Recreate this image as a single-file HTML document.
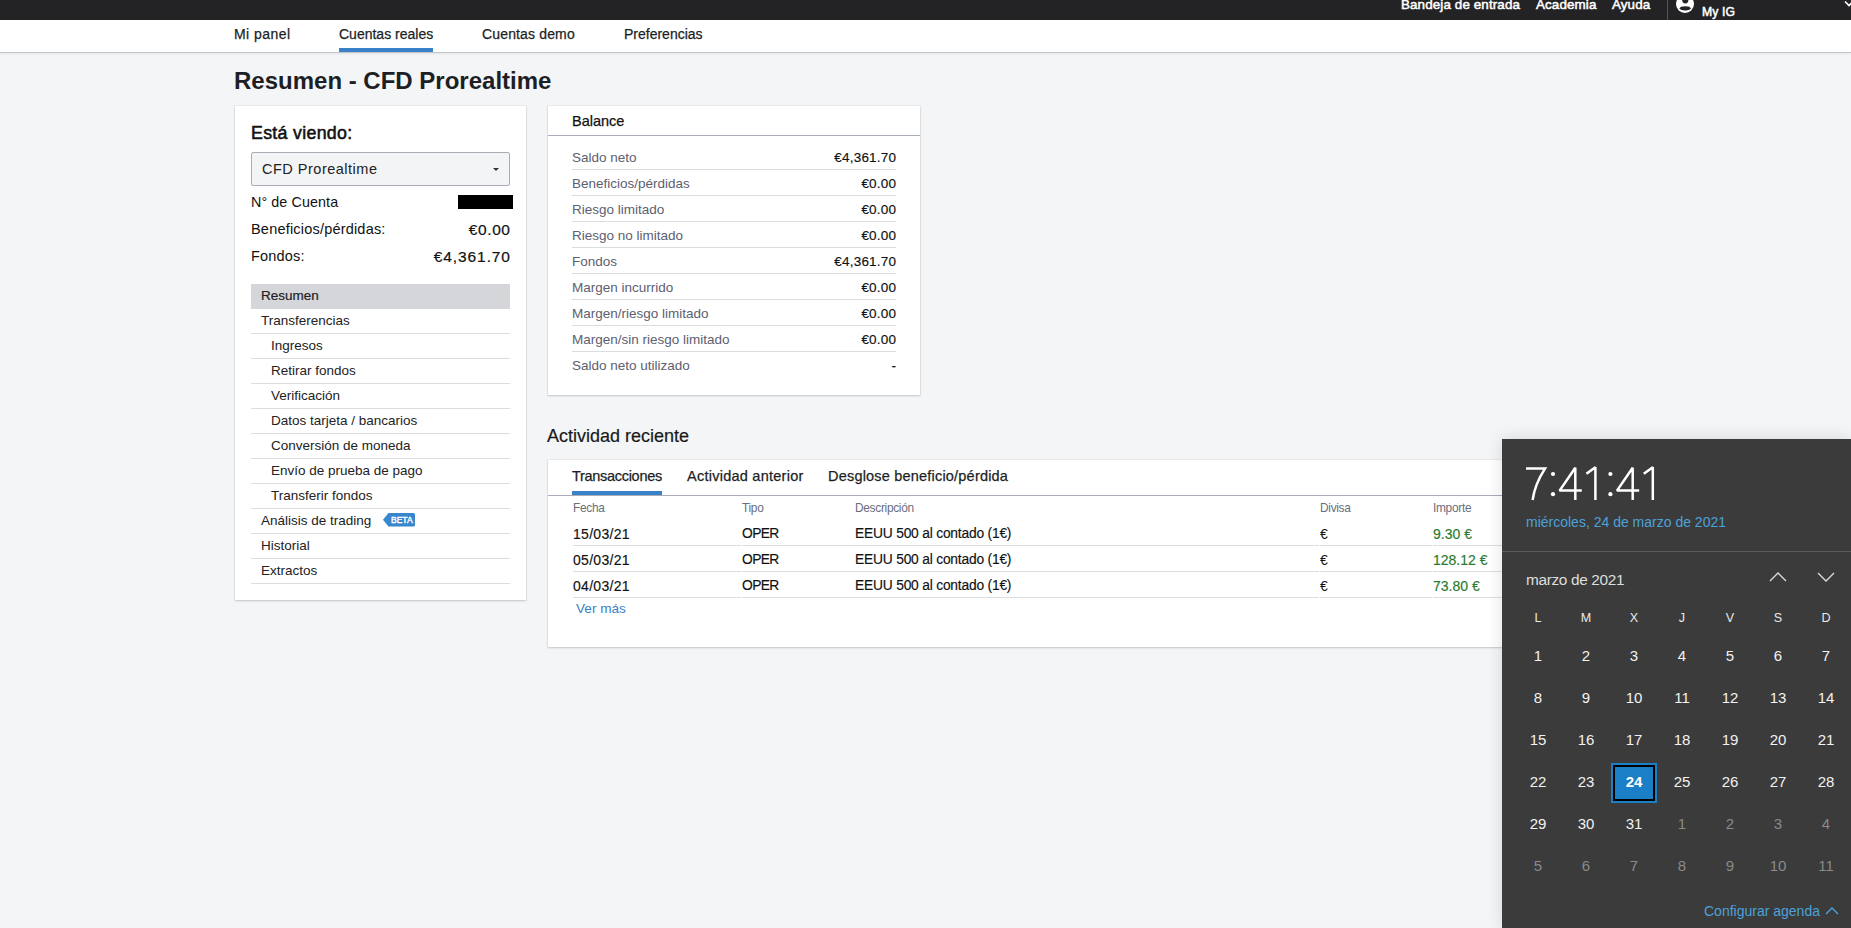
<!DOCTYPE html>
<html><head><meta charset="utf-8">
<style>
*{margin:0;padding:0;box-sizing:border-box}
html,body{width:1851px;height:928px;overflow:hidden}
body{background:#f4f5f7;font-family:"Liberation Sans",sans-serif;color:#222;position:relative}
.abs{position:absolute;white-space:nowrap}
#topbar{position:absolute;left:0;top:0;width:1851px;height:20px;background:#232325}
#topbar .t{position:absolute;color:#fff;font-size:13.4px;letter-spacing:0.12px;-webkit-text-stroke:0.5px #fff;top:-3px}
#nav{position:absolute;left:0;top:20px;width:1851px;height:33px;background:#fff;border-bottom:1px solid #c3c5cc;box-shadow:0 1px 2px rgba(0,0,0,0.07)}
#nav .n{position:absolute;top:6px;font-size:14px;color:#1d1f24;-webkit-text-stroke:0.25px #1d1f24}
#nav .ul{position:absolute;left:339px;top:28px;width:94px;height:4px;background:#3a82c8}
h1{position:absolute;left:234px;top:67px;font-size:24px;font-weight:bold;color:#1d1f24;white-space:nowrap}
.card{position:absolute;background:#fff;box-shadow:0 0 0 1px rgba(0,0,0,0.04),0 1px 2px rgba(0,0,0,0.16)}
</style></head>
<body>
<div id="topbar">
  <span class="t" style="left:1401px">Bandeja de entrada</span>
  <span class="t" style="left:1536px">Academia</span>
  <span class="t" style="left:1612px">Ayuda</span>
  <div style="position:absolute;left:1667px;top:0;width:1px;height:20px;background:#555"></div>
  <svg style="position:absolute;left:1670px;top:0" width="30" height="20"><circle cx="15" cy="4" r="9" fill="#fff"/><circle cx="15.3" cy="0.3" r="3.1" fill="#232325"/><ellipse cx="15.2" cy="8.3" rx="5.4" ry="2.1" fill="#232325"/></svg>
  <span class="t" style="left:1702px;top:4.5px;font-size:12.2px">My IG</span><svg style="position:absolute;left:1843px;top:0" width="8" height="10"><path d="M2 1.5L6 5.5L10 1.5" stroke="#fff" stroke-width="1.6" fill="none"/></svg>
</div>
<div id="nav">
  <span class="n" style="left:234px;letter-spacing:0.45px">Mi panel</span>
  <span class="n" style="left:339px">Cuentas reales</span>
  <span class="n" style="left:482px;letter-spacing:0.15px">Cuentas demo</span>
  <span class="n" style="left:624px">Preferencias</span>
  <div class="ul"></div>
</div>
<h1>Resumen - CFD Prorealtime</h1>

<div class="card" style="left:235px;top:106px;width:291px;height:494px">
 <div class="abs" style="left:16px;top:17px;font-size:17.8px;letter-spacing:0.3px;color:#111;-webkit-text-stroke:0.55px #111">Está viendo:</div>
 <div style="position:absolute;left:16px;top:46px;width:259px;height:34px;background:#f3f4f6;border:1px solid #a9acb5;border-radius:2px">
   <span class="abs" style="left:10px;top:7.5px;font-size:14.5px;letter-spacing:0.5px;color:#222">CFD Prorealtime</span>
   <div style="position:absolute;left:241px;top:15px;width:0;height:0;border-left:3px solid transparent;border-right:3px solid transparent;border-top:3px solid #333"></div>
 </div>
 <div class="abs" style="left:16px;top:88px;font-size:14.3px;letter-spacing:0.1px;color:#111">N° de Cuenta</div>
 <div style="position:absolute;left:223px;top:89px;width:55px;height:14px;background:#000"></div>
 <div class="abs" style="left:16px;top:115px;font-size:14.5px;letter-spacing:0.2px;color:#111">Beneficios/pérdidas:</div>
 <div class="abs" style="right:16px;top:115px;font-size:15.5px;letter-spacing:0.6px;margin-right:-0.6px;color:#111;-webkit-text-stroke:0.2px #111">€0.00</div>
 <div class="abs" style="left:16px;top:142px;font-size:14.5px;letter-spacing:0.2px;color:#111">Fondos:</div>
 <div class="abs" style="right:16px;top:142px;font-size:15.5px;letter-spacing:0.9px;margin-right:-0.9px;color:#111;-webkit-text-stroke:0.2px #111">€4,361.70</div>
 <div style="position:absolute;left:16px;top:178px;width:259px;height:25px;background:#d5d6da;"><span class="abs" style="left:10px;top:4px;font-size:13.5px;color:#222;-webkit-text-stroke:0.2px #222;">Resumen</span></div>
 <div style="position:absolute;left:16px;top:203px;width:259px;height:25px;border-bottom:1px solid #dcdde1;"><span class="abs" style="left:10px;top:4px;font-size:13.5px;color:#222;">Transferencias</span></div>
 <div style="position:absolute;left:16px;top:228px;width:259px;height:25px;border-bottom:1px solid #dcdde1;"><span class="abs" style="left:20px;top:4px;font-size:13.5px;color:#222;">Ingresos</span></div>
 <div style="position:absolute;left:16px;top:253px;width:259px;height:25px;border-bottom:1px solid #dcdde1;"><span class="abs" style="left:20px;top:4px;font-size:13.5px;color:#222;">Retirar fondos</span></div>
 <div style="position:absolute;left:16px;top:278px;width:259px;height:25px;border-bottom:1px solid #dcdde1;"><span class="abs" style="left:20px;top:4px;font-size:13.5px;color:#222;">Verificación</span></div>
 <div style="position:absolute;left:16px;top:303px;width:259px;height:25px;border-bottom:1px solid #dcdde1;"><span class="abs" style="left:20px;top:4px;font-size:13.5px;color:#222;">Datos tarjeta / bancarios</span></div>
 <div style="position:absolute;left:16px;top:328px;width:259px;height:25px;border-bottom:1px solid #dcdde1;"><span class="abs" style="left:20px;top:4px;font-size:13.5px;color:#222;">Conversión de moneda</span></div>
 <div style="position:absolute;left:16px;top:353px;width:259px;height:25px;border-bottom:1px solid #dcdde1;"><span class="abs" style="left:20px;top:4px;font-size:13.5px;color:#222;">Envío de prueba de pago</span></div>
 <div style="position:absolute;left:16px;top:378px;width:259px;height:25px;border-bottom:1px solid #dcdde1;"><span class="abs" style="left:20px;top:4px;font-size:13.5px;color:#222;">Transferir fondos</span></div>
 <div style="position:absolute;left:16px;top:403px;width:259px;height:25px;border-bottom:1px solid #dcdde1;"><span class="abs" style="left:10px;top:4px;font-size:13.5px;color:#222;">Análisis de trading</span><span style="position:absolute;left:132px;top:4px;width:32px;height:14px"><svg width="33" height="14" style="position:absolute;left:0;top:0"><path d="M5.5 0H30.5Q32 0 32 1.5V12Q32 13.5 30.5 13.5H5.5L0 6.75Z" fill="#3886cc"/></svg><span class="abs" style="left:8px;top:2px;font-size:8.5px;color:#fff;-webkit-text-stroke:0.4px #fff">BETA</span></span></div>
 <div style="position:absolute;left:16px;top:428px;width:259px;height:25px;border-bottom:1px solid #dcdde1;"><span class="abs" style="left:10px;top:4px;font-size:13.5px;color:#222;">Historial</span></div>
 <div style="position:absolute;left:16px;top:453px;width:259px;height:25px;border-bottom:1px solid #dcdde1;"><span class="abs" style="left:10px;top:4px;font-size:13.5px;color:#222;">Extractos</span></div>
</div>
<div class="card" style="left:548px;top:106px;width:372px;height:289px">
 <div class="abs" style="left:24px;top:7px;font-size:14.5px;color:#111;-webkit-text-stroke:0.25px #111">Balance</div>
 <div style="position:absolute;left:0;top:29px;width:372px;height:1px;background:#a9acb8"></div>
 <div style="position:absolute;left:24px;top:38px;width:324px;height:26px;border-bottom:1px solid #dcdde1;"><span class="abs" style="left:0;top:6px;font-size:13.5px;color:#5d6070">Saldo neto</span><span class="abs" style="right:0;top:6px;font-size:13.5px;letter-spacing:0.2px;margin-right:-0.2px;color:#111;-webkit-text-stroke:0.15px #111">€4,361.70</span></div>
 <div style="position:absolute;left:24px;top:64px;width:324px;height:26px;border-bottom:1px solid #dcdde1;"><span class="abs" style="left:0;top:6px;font-size:13.5px;color:#5d6070">Beneficios/pérdidas</span><span class="abs" style="right:0;top:6px;font-size:13.5px;letter-spacing:0.2px;margin-right:-0.2px;color:#111;-webkit-text-stroke:0.15px #111">€0.00</span></div>
 <div style="position:absolute;left:24px;top:90px;width:324px;height:26px;border-bottom:1px solid #dcdde1;"><span class="abs" style="left:0;top:6px;font-size:13.5px;color:#5d6070">Riesgo limitado</span><span class="abs" style="right:0;top:6px;font-size:13.5px;letter-spacing:0.2px;margin-right:-0.2px;color:#111;-webkit-text-stroke:0.15px #111">€0.00</span></div>
 <div style="position:absolute;left:24px;top:116px;width:324px;height:26px;border-bottom:1px solid #dcdde1;"><span class="abs" style="left:0;top:6px;font-size:13.5px;color:#5d6070">Riesgo no limitado</span><span class="abs" style="right:0;top:6px;font-size:13.5px;letter-spacing:0.2px;margin-right:-0.2px;color:#111;-webkit-text-stroke:0.15px #111">€0.00</span></div>
 <div style="position:absolute;left:24px;top:142px;width:324px;height:26px;border-bottom:1px solid #dcdde1;"><span class="abs" style="left:0;top:6px;font-size:13.5px;color:#5d6070">Fondos</span><span class="abs" style="right:0;top:6px;font-size:13.5px;letter-spacing:0.2px;margin-right:-0.2px;color:#111;-webkit-text-stroke:0.15px #111">€4,361.70</span></div>
 <div style="position:absolute;left:24px;top:168px;width:324px;height:26px;border-bottom:1px solid #dcdde1;"><span class="abs" style="left:0;top:6px;font-size:13.5px;color:#5d6070">Margen incurrido</span><span class="abs" style="right:0;top:6px;font-size:13.5px;letter-spacing:0.2px;margin-right:-0.2px;color:#111;-webkit-text-stroke:0.15px #111">€0.00</span></div>
 <div style="position:absolute;left:24px;top:194px;width:324px;height:26px;border-bottom:1px solid #dcdde1;"><span class="abs" style="left:0;top:6px;font-size:13.5px;color:#5d6070">Margen/riesgo limitado</span><span class="abs" style="right:0;top:6px;font-size:13.5px;letter-spacing:0.2px;margin-right:-0.2px;color:#111;-webkit-text-stroke:0.15px #111">€0.00</span></div>
 <div style="position:absolute;left:24px;top:220px;width:324px;height:26px;border-bottom:1px solid #dcdde1;"><span class="abs" style="left:0;top:6px;font-size:13.5px;color:#5d6070">Margen/sin riesgo limitado</span><span class="abs" style="right:0;top:6px;font-size:13.5px;letter-spacing:0.2px;margin-right:-0.2px;color:#111;-webkit-text-stroke:0.15px #111">€0.00</span></div>
 <div style="position:absolute;left:24px;top:246px;width:324px;height:26px;"><span class="abs" style="left:0;top:6px;font-size:13.5px;color:#5d6070">Saldo neto utilizado</span><span class="abs" style="right:0;top:6px;font-size:13.5px;letter-spacing:0.2px;margin-right:-0.2px;color:#111;-webkit-text-stroke:0.15px #111">-</span></div>
</div>
<div class="abs" style="left:547px;top:426px;font-size:18px;color:#1a1a1a;-webkit-text-stroke:0.2px #1a1a1a">Actividad reciente</div>
<div class="card" style="left:548px;top:460px;width:1290px;height:187px">
 <span class="abs" style="left:24px;top:8px;font-size:14.5px;letter-spacing:-0.3px;color:#1d1f24;-webkit-text-stroke:0.25px #1d1f24">Transacciones</span>
 <span class="abs" style="left:139px;top:8px;font-size:14.5px;letter-spacing:0.25px;color:#1d1f24;-webkit-text-stroke:0.25px #1d1f24">Actividad anterior</span>
 <span class="abs" style="left:280px;top:8px;font-size:14.5px;letter-spacing:0.2px;color:#1d1f24;-webkit-text-stroke:0.25px #1d1f24">Desglose beneficio/pérdida</span>
 <div style="position:absolute;left:0;top:35px;width:1290px;height:1px;background:#a9acb8"></div>
 <div style="position:absolute;left:24px;top:31px;width:90px;height:4px;background:#3a82c8"></div>
 <span class="abs" style="left:25px;top:41px;font-size:11.9px;letter-spacing:-0.3px;color:#6b6e7c">Fecha</span>
 <span class="abs" style="left:194px;top:41px;font-size:11.9px;letter-spacing:-0.3px;color:#6b6e7c">Tipo</span>
 <span class="abs" style="left:307px;top:41px;font-size:11.9px;letter-spacing:-0.3px;color:#6b6e7c">Descripción</span>
 <span class="abs" style="left:772px;top:41px;font-size:11.9px;letter-spacing:-0.3px;color:#6b6e7c">Divisa</span>
 <span class="abs" style="left:885px;top:41px;font-size:11.9px;letter-spacing:-0.3px;color:#6b6e7c">Importe</span>
 <div style="position:absolute;left:25px;top:60px;width:168px;height:26px;border-bottom:1px solid #dcdde1"><span class="abs" style="left:0;top:6px;font-size:14px;letter-spacing:0.3px;color:#111;-webkit-text-stroke:0.15px #111">15/03/21</span></div>
 <div style="position:absolute;left:194px;top:60px;width:295px;height:26px;border-bottom:1px solid #dcdde1"><span class="abs" style="left:0;top:6px;font-size:13.8px;letter-spacing:-0.6px;color:#111;-webkit-text-stroke:0.15px #111">OPER</span></div>
 <div style="position:absolute;left:307px;top:60px;width:464px;height:26px;border-bottom:1px solid #dcdde1"><span class="abs" style="left:0;top:6px;font-size:13.8px;letter-spacing:-0.2px;color:#111;-webkit-text-stroke:0.15px #111">EEUU 500 al contado (1€)</span></div>
 <div style="position:absolute;left:772px;top:60px;width:112px;height:26px;border-bottom:1px solid #dcdde1"><span class="abs" style="left:0;top:6px;font-size:14px;color:#111">€</span></div>
 <div style="position:absolute;left:885px;top:60px;width:200px;height:26px;border-bottom:1px solid #dcdde1"><span class="abs" style="left:0;top:6px;font-size:14px;color:#2a7a2e;-webkit-text-stroke:0.15px #2a7a2e">9.30 €</span></div>
 <div style="position:absolute;left:25px;top:86px;width:168px;height:26px;border-bottom:1px solid #dcdde1"><span class="abs" style="left:0;top:6px;font-size:14px;letter-spacing:0.3px;color:#111;-webkit-text-stroke:0.15px #111">05/03/21</span></div>
 <div style="position:absolute;left:194px;top:86px;width:295px;height:26px;border-bottom:1px solid #dcdde1"><span class="abs" style="left:0;top:6px;font-size:13.8px;letter-spacing:-0.6px;color:#111;-webkit-text-stroke:0.15px #111">OPER</span></div>
 <div style="position:absolute;left:307px;top:86px;width:464px;height:26px;border-bottom:1px solid #dcdde1"><span class="abs" style="left:0;top:6px;font-size:13.8px;letter-spacing:-0.2px;color:#111;-webkit-text-stroke:0.15px #111">EEUU 500 al contado (1€)</span></div>
 <div style="position:absolute;left:772px;top:86px;width:112px;height:26px;border-bottom:1px solid #dcdde1"><span class="abs" style="left:0;top:6px;font-size:14px;color:#111">€</span></div>
 <div style="position:absolute;left:885px;top:86px;width:200px;height:26px;border-bottom:1px solid #dcdde1"><span class="abs" style="left:0;top:6px;font-size:14px;color:#2a7a2e;-webkit-text-stroke:0.15px #2a7a2e">128.12 €</span></div>
 <div style="position:absolute;left:25px;top:112px;width:168px;height:26px;border-bottom:1px solid #dcdde1"><span class="abs" style="left:0;top:6px;font-size:14px;letter-spacing:0.3px;color:#111;-webkit-text-stroke:0.15px #111">04/03/21</span></div>
 <div style="position:absolute;left:194px;top:112px;width:295px;height:26px;border-bottom:1px solid #dcdde1"><span class="abs" style="left:0;top:6px;font-size:13.8px;letter-spacing:-0.6px;color:#111;-webkit-text-stroke:0.15px #111">OPER</span></div>
 <div style="position:absolute;left:307px;top:112px;width:464px;height:26px;border-bottom:1px solid #dcdde1"><span class="abs" style="left:0;top:6px;font-size:13.8px;letter-spacing:-0.2px;color:#111;-webkit-text-stroke:0.15px #111">EEUU 500 al contado (1€)</span></div>
 <div style="position:absolute;left:772px;top:112px;width:112px;height:26px;border-bottom:1px solid #dcdde1"><span class="abs" style="left:0;top:6px;font-size:14px;color:#111">€</span></div>
 <div style="position:absolute;left:885px;top:112px;width:200px;height:26px;border-bottom:1px solid #dcdde1"><span class="abs" style="left:0;top:6px;font-size:14px;color:#2a7a2e;-webkit-text-stroke:0.15px #2a7a2e">73.80 €</span></div>
 <span class="abs" style="left:28px;top:141px;font-size:13.6px;color:#3b80c6">Ver más</span>
</div>
<div id="cal" style="position:absolute;left:1502px;top:439px;width:349px;height:489px;background:#3b3b3b;box-shadow:0 0 16px rgba(0,0,0,0.13)">
 <div class="abs" style="left:24px;top:75px;font-size:14px;color:#4ca2da">miércoles, 24 de marzo de 2021</div>
 <div style="position:absolute;left:0;top:112px;width:349px;height:1px;background:#5a5a5a"></div>
 <div class="abs" style="left:24px;top:131.5px;font-size:15.4px;letter-spacing:-0.35px;color:#dedede">marzo de 2021</div>
 <svg style="position:absolute;left:266px;top:132px" width="20" height="12"><path d="M2 10L10 2L18 10" stroke="#ddd" stroke-width="1.3" fill="none"/></svg>
 <svg style="position:absolute;left:314px;top:132px" width="20" height="12"><path d="M2 2L10 10L18 2" stroke="#ddd" stroke-width="1.3" fill="none"/></svg>
 <span class="abs" style="left:16px;width:40px;text-align:center;top:172px;font-size:12.6px;color:#e8e8e8">L</span>
 <span class="abs" style="left:64px;width:40px;text-align:center;top:172px;font-size:12.6px;color:#e8e8e8">M</span>
 <span class="abs" style="left:112px;width:40px;text-align:center;top:172px;font-size:12.6px;color:#e8e8e8">X</span>
 <span class="abs" style="left:160px;width:40px;text-align:center;top:172px;font-size:12.6px;color:#e8e8e8">J</span>
 <span class="abs" style="left:208px;width:40px;text-align:center;top:172px;font-size:12.6px;color:#e8e8e8">V</span>
 <span class="abs" style="left:256px;width:40px;text-align:center;top:172px;font-size:12.6px;color:#e8e8e8">S</span>
 <span class="abs" style="left:304px;width:40px;text-align:center;top:172px;font-size:12.6px;color:#e8e8e8">D</span>
 <span class="abs" style="left:16px;width:40px;text-align:center;top:208px;font-size:15px;color:#f2f2f2">1</span>
 <span class="abs" style="left:64px;width:40px;text-align:center;top:208px;font-size:15px;color:#f2f2f2">2</span>
 <span class="abs" style="left:112px;width:40px;text-align:center;top:208px;font-size:15px;color:#f2f2f2">3</span>
 <span class="abs" style="left:160px;width:40px;text-align:center;top:208px;font-size:15px;color:#f2f2f2">4</span>
 <span class="abs" style="left:208px;width:40px;text-align:center;top:208px;font-size:15px;color:#f2f2f2">5</span>
 <span class="abs" style="left:256px;width:40px;text-align:center;top:208px;font-size:15px;color:#f2f2f2">6</span>
 <span class="abs" style="left:304px;width:40px;text-align:center;top:208px;font-size:15px;color:#f2f2f2">7</span>
 <span class="abs" style="left:16px;width:40px;text-align:center;top:250px;font-size:15px;color:#f2f2f2">8</span>
 <span class="abs" style="left:64px;width:40px;text-align:center;top:250px;font-size:15px;color:#f2f2f2">9</span>
 <span class="abs" style="left:112px;width:40px;text-align:center;top:250px;font-size:15px;color:#f2f2f2">10</span>
 <span class="abs" style="left:160px;width:40px;text-align:center;top:250px;font-size:15px;color:#f2f2f2">11</span>
 <span class="abs" style="left:208px;width:40px;text-align:center;top:250px;font-size:15px;color:#f2f2f2">12</span>
 <span class="abs" style="left:256px;width:40px;text-align:center;top:250px;font-size:15px;color:#f2f2f2">13</span>
 <span class="abs" style="left:304px;width:40px;text-align:center;top:250px;font-size:15px;color:#f2f2f2">14</span>
 <span class="abs" style="left:16px;width:40px;text-align:center;top:292px;font-size:15px;color:#f2f2f2">15</span>
 <span class="abs" style="left:64px;width:40px;text-align:center;top:292px;font-size:15px;color:#f2f2f2">16</span>
 <span class="abs" style="left:112px;width:40px;text-align:center;top:292px;font-size:15px;color:#f2f2f2">17</span>
 <span class="abs" style="left:160px;width:40px;text-align:center;top:292px;font-size:15px;color:#f2f2f2">18</span>
 <span class="abs" style="left:208px;width:40px;text-align:center;top:292px;font-size:15px;color:#f2f2f2">19</span>
 <span class="abs" style="left:256px;width:40px;text-align:center;top:292px;font-size:15px;color:#f2f2f2">20</span>
 <span class="abs" style="left:304px;width:40px;text-align:center;top:292px;font-size:15px;color:#f2f2f2">21</span>
 <span class="abs" style="left:16px;width:40px;text-align:center;top:334px;font-size:15px;color:#f2f2f2">22</span>
 <span class="abs" style="left:64px;width:40px;text-align:center;top:334px;font-size:15px;color:#f2f2f2">23</span>
 <div style="position:absolute;left:109px;top:324px;width:46px;height:40px;background:#000;border:2px solid #1a7fc6"><div style="position:absolute;left:2px;top:2px;right:2px;bottom:2px;background:#1a7fc6"></div></div>
 <span class="abs" style="left:112px;width:40px;text-align:center;top:334px;font-size:15px;color:#fff;font-weight:bold">24</span>
 <span class="abs" style="left:160px;width:40px;text-align:center;top:334px;font-size:15px;color:#f2f2f2">25</span>
 <span class="abs" style="left:208px;width:40px;text-align:center;top:334px;font-size:15px;color:#f2f2f2">26</span>
 <span class="abs" style="left:256px;width:40px;text-align:center;top:334px;font-size:15px;color:#f2f2f2">27</span>
 <span class="abs" style="left:304px;width:40px;text-align:center;top:334px;font-size:15px;color:#f2f2f2">28</span>
 <span class="abs" style="left:16px;width:40px;text-align:center;top:376px;font-size:15px;color:#f2f2f2">29</span>
 <span class="abs" style="left:64px;width:40px;text-align:center;top:376px;font-size:15px;color:#f2f2f2">30</span>
 <span class="abs" style="left:112px;width:40px;text-align:center;top:376px;font-size:15px;color:#f2f2f2">31</span>
 <span class="abs" style="left:160px;width:40px;text-align:center;top:376px;font-size:15px;color:#8a8a8a">1</span>
 <span class="abs" style="left:208px;width:40px;text-align:center;top:376px;font-size:15px;color:#8a8a8a">2</span>
 <span class="abs" style="left:256px;width:40px;text-align:center;top:376px;font-size:15px;color:#8a8a8a">3</span>
 <span class="abs" style="left:304px;width:40px;text-align:center;top:376px;font-size:15px;color:#8a8a8a">4</span>
 <span class="abs" style="left:16px;width:40px;text-align:center;top:418px;font-size:15px;color:#8a8a8a">5</span>
 <span class="abs" style="left:64px;width:40px;text-align:center;top:418px;font-size:15px;color:#8a8a8a">6</span>
 <span class="abs" style="left:112px;width:40px;text-align:center;top:418px;font-size:15px;color:#8a8a8a">7</span>
 <span class="abs" style="left:160px;width:40px;text-align:center;top:418px;font-size:15px;color:#8a8a8a">8</span>
 <span class="abs" style="left:208px;width:40px;text-align:center;top:418px;font-size:15px;color:#8a8a8a">9</span>
 <span class="abs" style="left:256px;width:40px;text-align:center;top:418px;font-size:15px;color:#8a8a8a">10</span>
 <span class="abs" style="left:304px;width:40px;text-align:center;top:418px;font-size:15px;color:#8a8a8a">11</span>
 <span class="abs" style="left:202px;top:464px;font-size:14px;color:#4ca2da">Configurar agenda</span>
 <svg style="position:absolute;left:323px;top:467px" width="14" height="9"><path d="M1 8L7 2L13 8" stroke="#4ca2da" stroke-width="1.3" fill="none"/></svg>
</div>
<svg style="position:absolute;left:0;top:0" width="1851" height="928"><g stroke="#fff" stroke-width="2.5" fill="none" stroke-linejoin="bevel">
<path stroke-linejoin="miter" d="M1526 468.6H1545C1539.5 477 1534.5 487 1532.6 500"/>
<path d="M1575.3 500V467.8L1559.6 490.6H1581.8"/>
<path d="M1595.4 500V467.2L1586.4 473.8"/>
<path d="M1632.7 500V467.8L1617 490.6H1639.2"/>
<path d="M1652.8 500V467.2L1643.8 473.8"/>
</g><g fill="#fff"><circle cx="1553" cy="474" r="2.1"/><circle cx="1553" cy="494.2" r="2.1"/><circle cx="1610.4" cy="474" r="2.1"/><circle cx="1610.4" cy="494.2" r="2.1"/></g></svg>
</body></html>
